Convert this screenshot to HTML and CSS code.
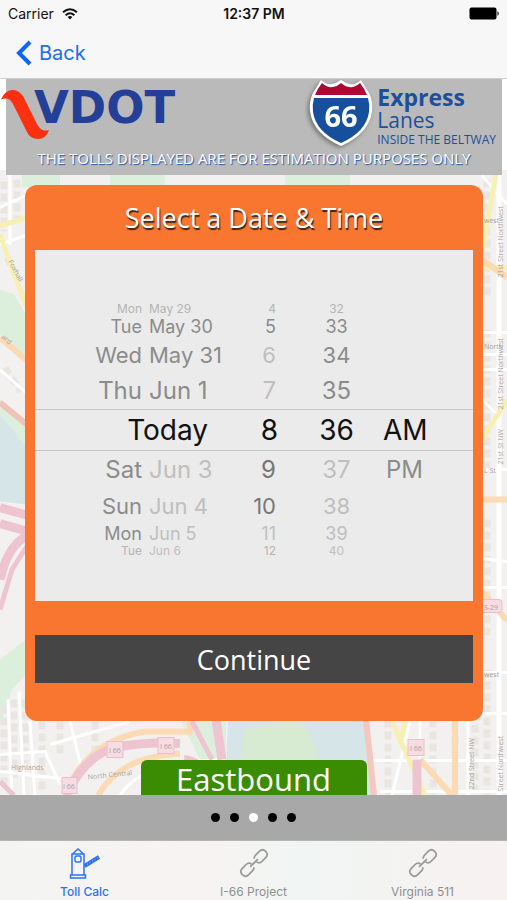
FILE: index.html
```html
<!DOCTYPE html>
<html lang="en">
<head>
<meta charset="utf-8">
<meta name="viewport" content="width=device-width, initial-scale=1">
<title>Toll Calc</title>
<link rel="stylesheet" href="styles.css">
</head>
<body>
<header class="top">
  <div class="status">
    <span class="carrier">Carrier
      <svg width="16" height="12" viewBox="0 0 16 12" fill="none" stroke="#111" stroke-width="2" aria-hidden="true"><path d="M1 4.300Q8-1.800 15 4.300M3.600 7.200Q8 3.400 12.400 7.200"/><path d="M8 11.500L5.600 9Q8 7 10.400 9Z" fill="#111" stroke="none"/></svg>
    </span>
    <span class="clock">12:37 PM</span>
    <svg class="battery" width="31" height="13" viewBox="0 0 31 13" aria-hidden="true"><rect x="0.500" y="0.500" width="27" height="12" rx="2"/><path d="M28.500 4Q31 6.500 28.500 9Z"/></svg>
  </div>
  <nav class="nav">
    <a class="back" href="#back">
      <svg width="16" height="26" viewBox="0 0 16 26" fill="none" stroke="#0a66ff" stroke-width="4" aria-hidden="true"><path d="M14 2L3 13L14 24"/></svg>
      Back
    </a>
  </nav>
</header>

<main class="content">
  <svg class="map" viewBox="0 170 507 626" preserveAspectRatio="xMidYMid slice" aria-hidden="true">
    <rect y="170" width="507" height="626" fill="#f3f1ef"/>
    <g fill="#dcefdc">
      <path d="M22 170H60V188H22ZM110 170H165V188H110ZM285 170H350V188H285ZM0 290L14 295 28 318V362L0 335ZM0 400L30 425V510L0 420ZM0 660L26 640V675L12 690 0 725Z"/>
      <path d="M180 720H226V760H200ZM240 720H310L318 760H244Z"/>
    </g>
    <path d="M0 416Q12 428 18 438L28 450V505L0 502ZM228 718H366L372 796H225Z" fill="#d5e5e8"/>
    <path d="M245 730Q290 716 305 725L320 762H240Z" fill="#d7ebd3"/>
    <g stroke="#e9e6e2" stroke-width="7" stroke-dasharray="8 4" fill="none">
      <path d="M4 182V232M17 180V222M7 258L20 283M5 368L21 392M4 706V790M14 700V778M25 700V764M42 722V790M60 722V755M95 722V755M165 765H225M388 720V795M433 720V795M455 725V795M475 725V795M487 180V300M487 330V470M487 520V640M487 670V796"/>
    </g>
    <g stroke="#fff" stroke-width="3" fill="none">
      <path d="M0 208L28 195M10 170V245M0 245L28 235M0 370L28 395M0 772L70 780M8 700L12 796M19 692L24 796M30 722L35 796M0 755L45 752 60 785M70 722L82 770M50 745L130 722M120 796Q140 762 225 760M482 176L507 205M482 333H507M482 355H507M482 370H507M482 400L500 418M482 470H507M482 559L507 562M482 588H507M370 761H507M380 792H507M410 722L392 796M420 722V796M482 673H507M482 714H507M468 722V796"/>
      <path d="M499 170V796" stroke-width="5"/>
    </g>
    <g fill="none" stroke="#f6f0b3" stroke-width="5">
      <path d="M0 226L28 218M0 235L16 280 28 310M482 252L496 175M482 440L507 400M482 268H507M392 722L425 796M405 722L400 745"/>
    </g>
    <g fill="none" stroke="#fbdab4" stroke-width="6">
      <path d="M0 338L28 362M482 260L507 278M482 592L507 621M482 500H507M65 796Q85 742 145 732H190V720M98 796Q120 757 180 754M455 720V796M420 760L452 796"/>
      <path d="M0 403L28 426" stroke="#f2c1b7"/>
      <path d="M366 720L374 796" stroke="#f4c8be"/>
    </g>
    <g fill="none" stroke="#efc4d1" stroke-width="9">
      <path d="M0 508L28 516M0 524L28 532M0 580Q8 545 28 536M66 796Q85 756 115 748Q145 742 180 744M184 760Q205 762 220 796M417 760V796M216 720L222 760"/>
      <path d="M192 722L212 760M0 610L12 570 28 545M0 782L14 796" stroke-width="5"/>
    </g>
    <g fill="#f7dce2" stroke="#e9bfca">
      <rect x="107" y="742" width="16" height="16"/><rect x="158" y="738" width="16" height="16"/><rect x="62" y="778" width="15" height="16"/><rect x="408" y="740" width="16" height="16"/><rect x="470" y="600" width="32" height="13" rx="3"/>
    </g>
    <g class="map-labels">
      <text x="109" y="753">I 66</text><text x="160" y="749">I 66</text><text x="63" y="789">I 66</text><text x="410" y="751">I 66</text><text x="484" y="610">S-29</text>
      <text x="11" y="770">Highlands</text><text x="88" y="780" transform="rotate(-6 88 780)">North Central</text>
      <text x="8" y="262" transform="rotate(62 8 262)">Foxhall</text><text x="1" y="338" transform="rotate(42 1 338)">ard</text>
      <text x="484" y="349">North</text><text x="484" y="473">L St</text><text x="484" y="677">west</text><text x="484" y="223">west</text>
      <text x="503" y="278" transform="rotate(-90 503 278)">21st Street Northwest</text><text x="503" y="410" transform="rotate(-90 503 410)">21st Street Northwest</text><text x="503" y="465" transform="rotate(-90 503 465)">21st St NW</text>
      <text x="503" y="792" transform="rotate(-90 503 792)">Street Northwest</text><text x="474" y="790" transform="rotate(-90 474 790)">22nd Street NW</text>
    </g>
  </svg>

  <section class="banner">
    <div class="brands">
      <div class="vdot">
        <svg width="50" height="52" viewBox="0 0 50 52" aria-hidden="true"><path d="M1 11.500C4 5 8 1.500 13.500 2Q20 2.500 24 10L36 34C40 42 43 43.500 49 42Q46 51 38 51Q30 51 27 44L14 18C11 11 7 9 1 11.500Z" fill="#fb3010"/></svg>
        <span class="vdot-name">VDOT</span>
      </div>
      <div class="express">
        <svg class="shield" width="66" height="68" viewBox="0 0 66 68" aria-hidden="true">
          <path d="M13 1Q18 6 24 5Q29 4 33 1Q37 4 42 5Q48 6 53 1Q56 6 61 14Q65 22 64 32Q61 55 33 67Q5 55 2 32Q1 22 5 14Q10 6 13 1Z" fill="#fff"/>
          <path d="M14 4Q19 9 25 8Q30 7 33 4Q36 7 41 8Q47 9 52 4Q56 9 59 16H7Q10 9 14 4Z" fill="#ac0a32"/>
          <path d="M6 19H60Q62 26 61 33Q58 53 33 64Q8 53 5 33Q4 26 6 19Z" fill="#164f9b"/>
          <text x="33" y="48" text-anchor="middle" class="shield-number">66</text>
        </svg>
        <div class="express-text">
          <strong>Express</strong>
          <span class="lanes">Lanes</span>
          <span class="inside">INSIDE THE BELTWAY</span>
        </div>
      </div>
    </div>
    <p class="notice">THE TOLLS DISPLAYED ARE FOR ESTIMATION PURPOSES ONLY</p>
  </section>

  <section class="card">
    <h1>Select a Date &amp; Time</h1>
    <div class="picker">
      <ul class="wheel dates" aria-label="Date">
        <li><span>Mon</span><span>May 29</span></li>
        <li><span>Tue</span><span>May 30</span></li>
        <li><span>Wed</span><span>May 31</span></li>
        <li><span>Thu</span><span>Jun 1</span></li>
        <li class="today"><span>Today</span></li>
        <li><span>Sat</span><span class="faint">Jun 3</span></li>
        <li><span>Sun</span><span class="faint">Jun 4</span></li>
        <li><span>Mon</span><span class="faint">Jun 5</span></li>
        <li><span>Tue</span><span class="faint">Jun 6</span></li>
      </ul>
      <ul class="wheel hours" aria-label="Hour">
        <li>4</li><li>5</li><li class="faint">6</li><li class="faint">7</li><li>8</li><li class="dark">9</li><li class="dark">10</li><li class="faint">11</li><li>12</li>
      </ul>
      <ul class="wheel minutes" aria-label="Minute">
        <li>32</li><li>33</li><li>34</li><li>35</li><li>36</li><li class="faint">37</li><li class="faint">38</li><li class="faint">39</li><li class="faint">40</li>
      </ul>
      <ul class="wheel period" aria-label="AM or PM">
        <li></li><li></li><li></li><li></li><li>AM</li><li>PM</li><li></li><li></li><li></li>
      </ul>
    </div>
    <button class="continue" type="button">Continue</button>
  </section>

  <button class="direction" type="button">Eastbound</button>
</main>

<div class="dots" aria-hidden="true"><i></i><i></i><i class="on"></i><i></i><i></i></div>

<nav class="tabs">
  <a class="tab active" href="#calc">
    <svg width="32" height="32" viewBox="0 0 32 32" fill="none" stroke="#2b73ed" stroke-width="1.500" aria-hidden="true"><path d="M3 28V7H15V28M1.500 28H16.500V31H1.500ZM4 6.500L9 2L14 6.500"/><rect x="6" y="9" width="6" height="6" rx="1.500"/><path d="M15.500 19L30 10" stroke-width="4"/><path d="M18 17.500L29 10.500" stroke="#a9c7f7" stroke-width="1" stroke-dasharray="1 2"/></svg>
    Toll Calc
  </a>
  <a class="tab" href="#project">
    <svg width="32" height="32" viewBox="0 0 32 32" fill="none" stroke="#999" stroke-width="1.700" aria-hidden="true"><g transform="rotate(-45 16 16)"><path d="M13 19Q11.500 20.500 9 20.500H4Q-.5 20.500-.5 16T4 11.500H9Q13 11.500 13.500 15M19 13Q20.500 11.500 23 11.500H28Q32.500 11.500 32.500 16T28 20.500H23Q19 20.500 18.500 17"/><path d="M10.500 16H21.500"/></g></svg>
    I-66 Project
  </a>
  <a class="tab" href="#virginia">
    <svg width="32" height="32" viewBox="0 0 32 32" fill="none" stroke="#999" stroke-width="1.700" aria-hidden="true"><g transform="rotate(-45 16 16)"><path d="M13 19Q11.500 20.500 9 20.500H4Q-.5 20.500-.5 16T4 11.500H9Q13 11.500 13.500 15M19 13Q20.500 11.500 23 11.500H28Q32.500 11.500 32.500 16T28 20.500H23Q19 20.500 18.500 17"/><path d="M10.500 16H21.500"/></g></svg>
    Virginia 511
  </a>
</nav>
</body>
</html>
```
FILE: styles.css
```css
* { box-sizing: border-box; }

body {
  margin: 0;
  height: 100vh;
  display: flex;
  flex-direction: column;
  font-family: Inter, "Liberation Sans", sans-serif;
  background: #fff;
  color: #111;
}

a { text-decoration: none; }

.top { background: #f7f7f7; border-bottom: 1px solid #d0d0d0; }

.status {
  display: grid;
  grid-template-columns: 1fr auto 1fr;
  align-items: center;
  padding: 0 7px 0 8px;
  height: 27px;
  font-size: 14px;
}
.carrier { display: flex; align-items: center; gap: 8px; }
.clock { font-weight: 600; }
.battery { justify-self: end; }

.nav { height: 51px; padding: 0 16px; display: flex; align-items: center; }
.back {
  display: flex;
  align-items: center;
  gap: 7px;
  font-size: 20px;
  color: #1a6fee;
}

.content {
  flex: 1;
  min-height: 0;
  position: relative;
  overflow: hidden;
  display: flex;
  flex-direction: column;
}
.map {
  position: absolute;
  inset: 91px 0 0;
  width: 100%;
  height: calc(100% - 91px);
}
.map-labels { font: 7px "Open Sans", sans-serif; fill: #a8a19f; }

.banner {
  position: relative;
  flex: none;
  margin: 0 5px 0 6px;
  padding-bottom: 5px;
  background: #bababa;
}
.brands { display: flex; justify-content: space-between; height: 67px; }
.vdot { display: flex; align-items: flex-start; margin-left: -6px; padding-top: 9px; }
.vdot-name {
  margin-left: -16px;
  font: bold 45px/40px "DejaVu Sans", sans-serif;
  color: #233f97;
}
.express { display: flex; gap: 3px; padding-right: 6px; }
.shield { filter: drop-shadow(-2px 2px 2px #777); }
.shield-number { font: bold 29px "Open Sans", sans-serif; fill: #fff; }
.express-text {
  display: flex;
  flex-direction: column;
  padding-top: 7px;
  font-family: "Open Sans", sans-serif;
  color: #1d4f9a;
}
.express-text strong { font-size: 23px; line-height: 23px; }
.lanes { font-size: 21px; line-height: 22px; }
.inside { font-size: 12px; line-height: 18px; white-space: nowrap; }

.notice {
  margin: 0;
  font: 15px/24px "Open Sans", sans-serif;
  text-align: center;
  white-space: nowrap;
  color: #fff;
  text-shadow: 1px 1px 1px #1e579f;
}

.card {
  position: relative;
  flex: none;
  margin: 10px 24px 0 25px;
  padding: 0 10px 38px;
  border-radius: 12px;
  background: #f87630;
}
.card h1 {
  margin: 0;
  font: 27px/65px "Open Sans", sans-serif;
  text-align: center;
  color: #fff;
  text-shadow: 1px 2px 1px #3b2418;
}

.picker {
  display: grid;
  grid-template-columns: 207fr 36fr 105fr 90fr;
  padding: 52px 0 43px;
  background: #ebebeb;
}
.wheel { margin: 0; padding: 0; list-style: none; color: #8b8b8b; }
.wheel li {
  display: flex;
  align-items: center;
  height: 35px;
  font-size: 22px;
  line-height: 24px;
  white-space: nowrap;
}
.wheel li:nth-child(1), .wheel li:nth-child(9) {
  height: 14px;
  font-size: 12px;
  line-height: 14px;
  color: #b4b4b4;
}
.wheel li:nth-child(2), .wheel li:nth-child(8) { height: 21px; font-size: 18px; line-height: 21px; }
.wheel li:nth-child(4), .wheel li:nth-child(6) { height: 37px; font-size: 24px; }
.wheel li:nth-child(5) {
  height: 42px;
  font-size: 28px;
  color: #111;
  border: solid #c4c6c6;
  border-width: 1px 0;
}
.dates li { display: grid; grid-template-columns: 107fr 93fr; column-gap: 7px; }
.dates li span:first-child { text-align: right; }
.dates .today span { grid-column: 1 / 3; padding-right: 34px; }
.hours li { justify-content: flex-end; padding-right: 2px; }
.hours li:nth-child(5) { padding-right: 0; }
.minutes li { justify-content: center; padding-left: 12px; }
.period li:nth-child(6) { padding-left: 3px; }
.wheel .faint, .wheel li.faint { color: #bfbfbf; }
.wheel li.dark { color: #777; }

.continue {
  display: block;
  width: 100%;
  height: 48px;
  margin-top: 34px;
  border: 0;
  background: #454545;
  color: #fff;
  font: 27px "Open Sans", sans-serif;
}

.direction {
  position: relative;
  flex: none;
  align-self: center;
  width: 226px;
  height: 52px;
  margin-top: 39px;
  padding: 0 0 14px;
  border: 0;
  border-radius: 6px;
  background: #3b8c03;
  color: #fff;
  font: 31px/38px "Open Sans", sans-serif;
}

.dots {
  display: flex;
  justify-content: center;
  align-items: center;
  gap: 10px;
  height: 45px;
  background: #a8a8a8;
}
.dots i { width: 9px; height: 9px; border-radius: 50%; background: #000; }
.dots .on { background: #fff; }

.tabs {
  display: grid;
  grid-template-columns: repeat(3, 1fr);
  height: 60px;
  border-top: 1px solid #b5b5b5;
  background: linear-gradient(90deg, #f4f5f2, #f7f3f2 38%, #f0f5f3 60%, #f7f1f0);
}
.tab {
  display: flex;
  flex-direction: column;
  align-items: center;
  gap: 5px;
  padding-top: 6px;
  font-size: 12px;
  line-height: 16px;
  color: #8f8f8f;
}
.active { color: #2b73ed; font-weight: 500; }
```
